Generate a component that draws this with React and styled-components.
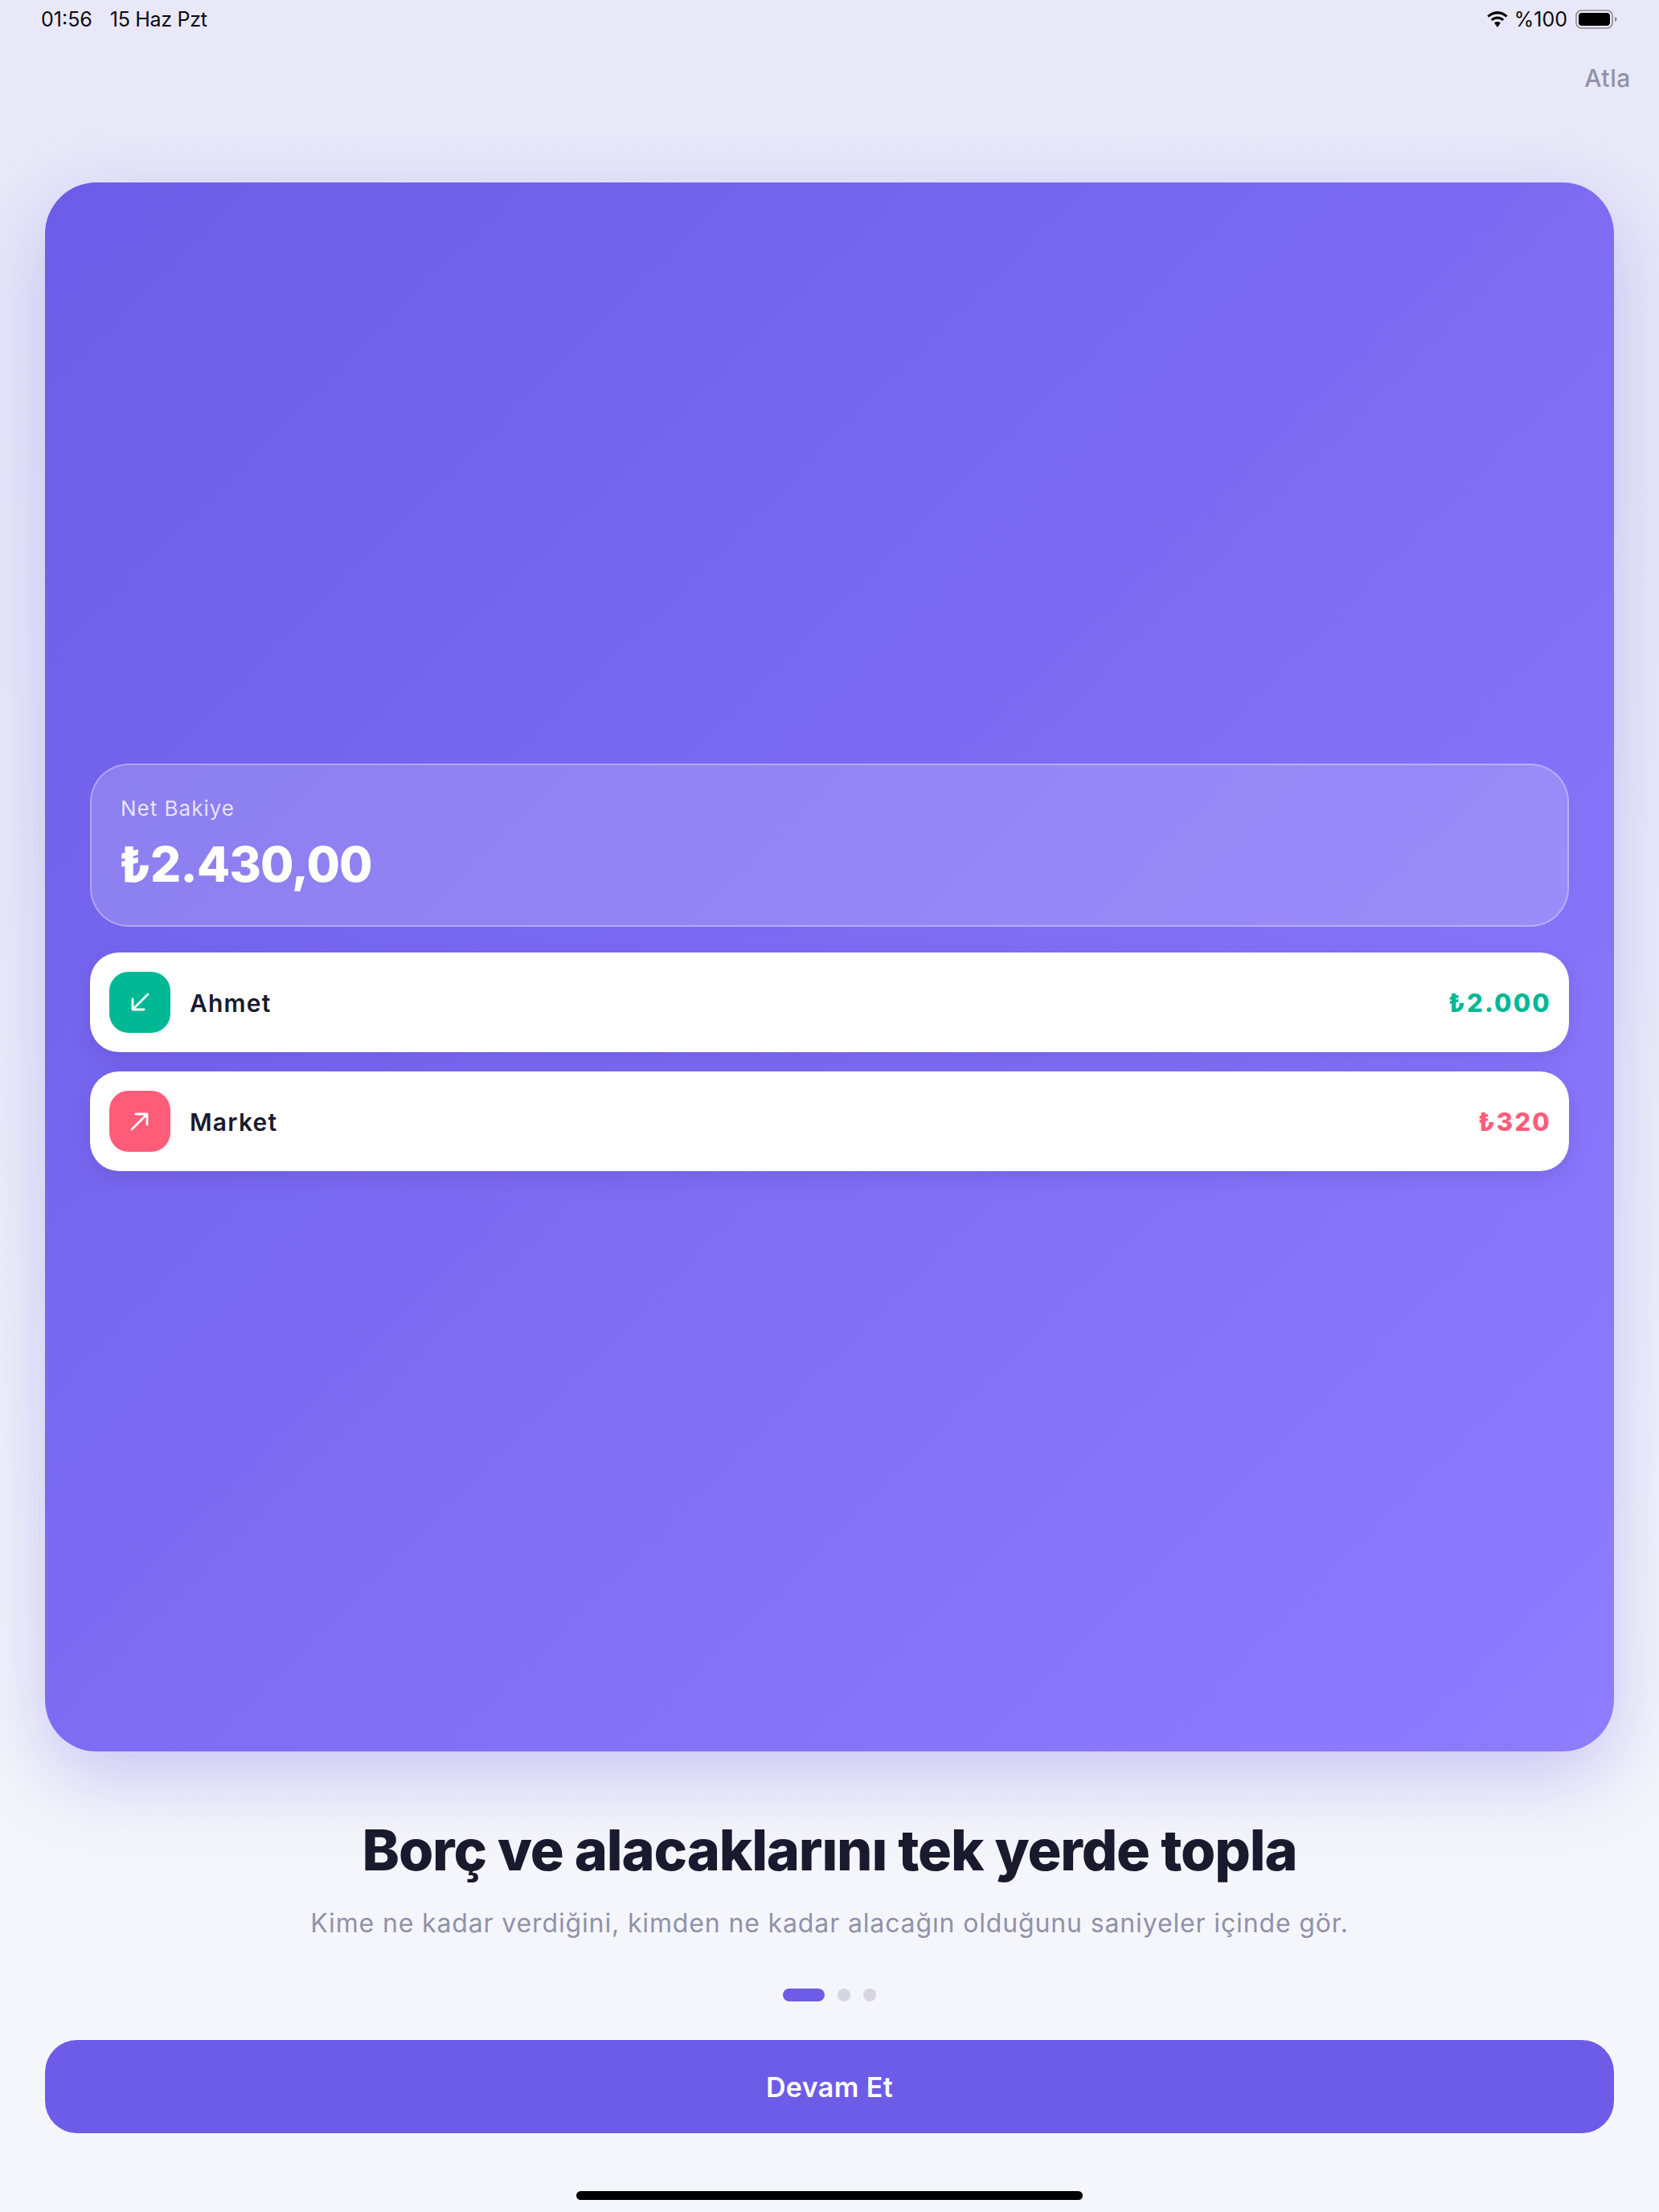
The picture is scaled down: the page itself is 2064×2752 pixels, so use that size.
import React from "react";
import styled, { createGlobalStyle } from "styled-components";

const GlobalStyle = createGlobalStyle`
  html, body {
    margin: 0;
    padding: 0;
  }
  body {
    font-family: Inter, "Noto Sans", sans-serif;
    background: #f5f6fb;
  }
  * {
    box-sizing: border-box;
  }
`;

const Page = styled.div`
  width: 2064px;
  height: 2752px;
  display: flex;
  flex-direction: column;
  overflow: hidden;
  background: linear-gradient(180deg, #e9e8f8 0%, #ebeaf9 30%, #f5f6fb 84%);
`;

const StatusBar = styled.div`
  height: 48px;
  padding: 0 52px 0 51px;
  display: flex;
  align-items: center;
  justify-content: space-between;
  font-size: 25px;
  color: #0b0b0f;
`;

const StatusGroup = styled.div`
  display: flex;
  align-items: center;
  gap: 22px;
`;

const StatusIcons = styled(StatusGroup)`
  gap: 10px;
`;

const DateText = styled.span`
  letter-spacing: -0.3px;
`;

const PercentText = styled.span`
  margin-left: -4px;
`;

const SkipRow = styled.div`
  height: 48px;
  margin-top: 25px;
  padding-right: 35px;
  display: flex;
  align-items: center;
  justify-content: flex-end;
`;

const Skip = styled.span`
  font-size: 30px;
  font-weight: 500;
  letter-spacing: 0.6px;
  color: #9191a9;
`;

const HeroCard = styled.div`
  flex: none;
  width: 1952px;
  height: 1952px;
  margin: 106px 56px 0;
  padding: 0 56px;
  border-radius: 64px;
  display: flex;
  flex-direction: column;
  justify-content: center;
  background: linear-gradient(135deg, #6c5ce7 0%, #8e7dff 100%);
  box-shadow: 0 32px 96px rgba(108, 92, 231, 0.32);
`;

const BalanceBox = styled.div`
  height: 203px;
  margin-bottom: 32px;
  padding: 0 36px 3px;
  border-radius: 48px;
  border: 2px solid rgba(255, 255, 255, 0.3);
  background: rgba(255, 255, 255, 0.18);
  display: flex;
  flex-direction: column;
  justify-content: center;
  color: #fff;
`;

const BalanceLabel = styled.div`
  font-size: 26px;
  line-height: 36px;
  letter-spacing: 1px;
  color: rgba(255, 255, 255, 0.8);
`;

const BalanceValue = styled.div`
  margin-top: 15px;
  margin-left: -2px;
  font-size: 60px;
  line-height: 72px;
  font-weight: 800;
  letter-spacing: -0.8px;
`;

const Rows = styled.div`
  display: flex;
  flex-direction: column;
  gap: 24px;
`;

const Row = styled.div`
  height: 124px;
  padding: 0 24px;
  border-radius: 36px;
  background: #fff;
  display: flex;
  align-items: center;
  gap: 24px;
  box-shadow: 0 8px 24px rgba(40, 30, 120, 0.14);
`;

const IconTile = styled.div`
  width: 76px;
  height: 76px;
  border-radius: 24px;
  display: flex;
  align-items: center;
  justify-content: center;
  color: #fff;
  background: ${(props) => props.$color};
`;

const RowName = styled.span`
  flex: 1;
  padding-top: 2px;
  font-size: 30px;
  font-weight: 600;
  letter-spacing: 1.2px;
  color: #1a1a2e;
`;

const RowAmount = styled.span`
  margin-right: -2px;
  padding-top: 2px;
  font-size: 31px;
  font-weight: 800;
  letter-spacing: 2.2px;
  color: ${(props) => props.$color};
`;

const Title = styled.h1`
  margin: 81px 0 0;
  font-size: 70px;
  line-height: 84px;
  font-weight: 800;
  letter-spacing: -1.15px;
  text-align: center;
  color: #1a1a2e;
`;

const Subtitle = styled.p`
  margin: 27px 0 0;
  font-size: 32px;
  line-height: 44px;
  letter-spacing: 0.86px;
  text-align: center;
  color: #9191a9;
`;

const Dots = styled.div`
  margin-top: 59px;
  display: flex;
  justify-content: center;
  gap: 16px;
`;

const Dot = styled.span`
  width: ${(props) => (props.$active ? 52 : 16)}px;
  height: 16px;
  border-radius: 8px;
  background: ${(props) => (props.$active ? "#6c5ce7" : "#d5d6e2")};
`;

const MainButton = styled.button`
  flex: none;
  width: 1952px;
  height: 116px;
  margin: 48px 56px 0;
  border: 0;
  border-radius: 40px;
  background: #6c5ce7;
  color: #fff;
  font-family: inherit;
  font-size: 34px;
  font-weight: 600;
  letter-spacing: 0.4px;
`;

const HomeBar = styled.div`
  flex: none;
  width: 630px;
  height: 11px;
  margin: 72px auto 0;
  border-radius: 6px;
  background: #000;
`;

const WifiIcon = () => (
  <svg width="30" height="22" viewBox="0 0 28 21">
    <path
      d="M14 4.2c3.9 0 7.4 1.5 10.1 4l2-2.1C22.8 3 18.6 1 14 1S5.2 3 1.9 6.1l2 2.1c2.700-2.500 6.200-4 10.100-4z"
      fill="#000"
    />
    <path
      d="M14 10.300c2.200 0 4.200.8 5.800 2.200l2.100-2.100C19.800 8.400 17 7.200 14 7.200s-5.800 1.200-7.900 3.200l2.100 2.100c1.600-1.400 3.600-2.200 5.800-2.200z"
      fill="#000"
    />
    <path d="M14 13.300c-1.400 0-2.700.5-3.700 1.400L14 20l3.700-5.300c-1-.9-2.300-1.400-3.700-1.400z" fill="#000" />
  </svg>
);

const BatteryIcon = () => (
  <svg width="52" height="24" viewBox="0 0 52 24">
    <rect x="1" y="1" width="45" height="22" rx="6.500" fill="none" stroke="#8a8a90" strokeWidth="1.600" />
    <rect x="4" y="4" width="39" height="16" rx="4" fill="#000" />
    <path d="M49 9c1.600.4 2.500 1.500 2.500 3s-.9 2.600-2.500 3z" fill="#8a8a90" />
  </svg>
);

const ArrowIcon = ({ d }) => (
  <svg width="24" height="24" viewBox="0 0 24 24" fill="none" stroke="currentColor" strokeWidth="2.800" strokeLinecap="round" strokeLinejoin="round">
    <path d={d} />
  </svg>
);

const rows = [
  { name: "Ahmet", amount: "₺2.000", color: "#00b894", arrow: "M22 2 3 21M3 8v13h14" },
  { name: "Market", amount: "₺320", color: "#ff5c7a", arrow: "M2 22 21 3M7 3h14v13" },
];

const App = () => (
  <Page>
    <GlobalStyle />
    <StatusBar>
      <StatusGroup>
        <span>01:56</span>
        <DateText>15 Haz Pzt</DateText>
      </StatusGroup>
      <StatusIcons>
        <WifiIcon />
        <PercentText>%100</PercentText>
        <BatteryIcon />
      </StatusIcons>
    </StatusBar>
    <SkipRow>
      <Skip>Atla</Skip>
    </SkipRow>
    <HeroCard>
      <BalanceBox>
        <BalanceLabel>Net Bakiye</BalanceLabel>
        <BalanceValue>₺2.430,00</BalanceValue>
      </BalanceBox>
      <Rows>
        {rows.map(({ name, amount, color, arrow }) => (
          <Row key={name}>
            <IconTile $color={color}>
              <ArrowIcon d={arrow} />
            </IconTile>
            <RowName>{name}</RowName>
            <RowAmount $color={color}>{amount}</RowAmount>
          </Row>
        ))}
      </Rows>
    </HeroCard>
    <Title>Borç ve alacaklarını tek yerde topla</Title>
    <Subtitle>Kime ne kadar verdiğini, kimden ne kadar alacağın olduğunu saniyeler içinde gör.</Subtitle>
    <Dots>
      <Dot $active />
      <Dot />
      <Dot />
    </Dots>
    <MainButton>Devam Et</MainButton>
    <HomeBar />
  </Page>
);

export default App;
